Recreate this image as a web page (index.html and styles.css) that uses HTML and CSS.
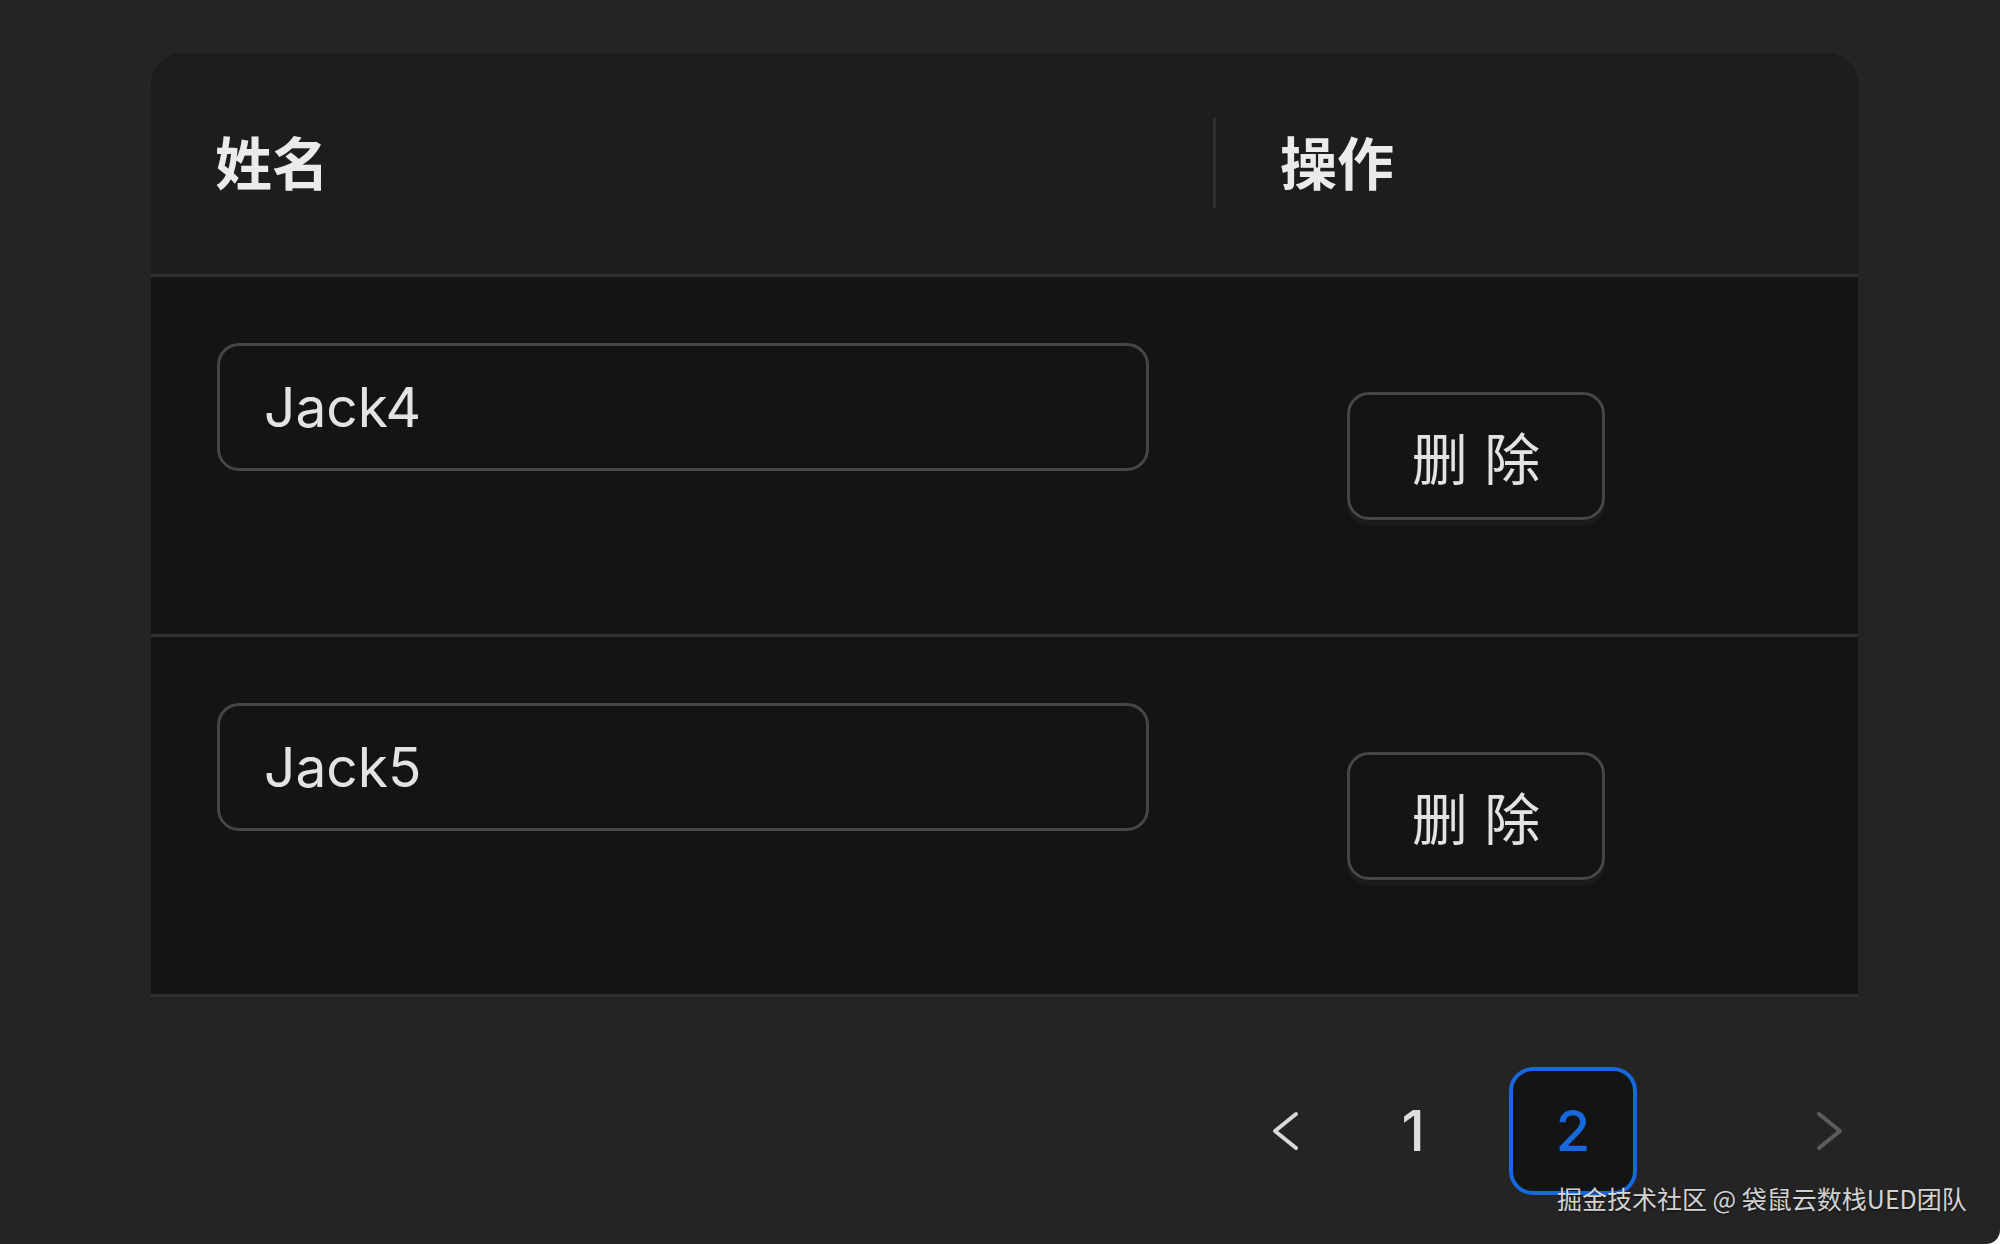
FILE: index.html
```html
<!DOCTYPE html>
<html lang="zh-CN">
<head>
<meta charset="utf-8">
<title>Table</title>
<link rel="stylesheet" href="styles.css">
</head>
<body>
<div class="page">
  <div class="table">
    <div class="thead">
      <div class="th">姓名</div>
      <div class="th th-action">操作</div>
    </div>
    <div class="row">
      <div class="td td-name"><div class="input">Jack4</div></div>
      <div class="td td-action"><button class="btn">删 除</button></div>
    </div>
    <div class="row">
      <div class="td td-name"><div class="input">Jack5</div></div>
      <div class="td td-action"><button class="btn">删 除</button></div>
    </div>
  </div>
  <div class="pagination">
    <div class="pg-item pg-prev">
      <svg width="28" height="40" viewBox="0 0 28 40"><polyline points="25,3 4,20 25,37" fill="none" stroke="currentColor" stroke-width="4" stroke-linecap="round" stroke-linejoin="round"/></svg>
    </div>
    <div class="pg-item">1</div>
    <div class="pg-item pg-active">2</div>
    <div class="pg-item pg-next">
      <svg width="28" height="40" viewBox="0 0 28 40"><polyline points="3,3 24,20 3,37" fill="none" stroke="currentColor" stroke-width="4" stroke-linecap="round" stroke-linejoin="round"/></svg>
    </div>
  </div>
  <div class="watermark">掘金技术社区 @ 袋鼠云数栈UED团队</div>
</div>
</body>
</html>
```
FILE: styles.css
```css
html, body {
  margin: 0;
  padding: 0;
}
body {
  background: #ffffff;
}
.page {
  position: relative;
  width: 2000px;
  height: 1244px;
  box-sizing: border-box;
  padding-top: 53px;
  background: #242424;
  border-bottom-right-radius: 14px;
  overflow: hidden;
  font-family: Inter, "Noto Sans CJK SC", sans-serif;
}
.table {
  margin-left: 151px;
  width: 1707px;
  border-radius: 32px 32px 0 0;
  overflow: hidden;
  background: #141414;
}
.thead {
  display: grid;
  grid-template-columns: 1062px 1fr;
  height: 221px;
  background: #1d1d1d;
  border-bottom: 3px solid #303030;
}
.th {
  position: relative;
  display: flex;
  align-items: center;
  padding-left: 64px;
  padding-bottom: 8px;
  font-family: "Noto Sans CJK SC", sans-serif;
  font-size: 57px;
  font-weight: 600;
  color: #ebebeb;
}
.th-action {
  padding-left: 67px;
}
.th-action::before {
  content: "";
  position: absolute;
  left: 0;
  top: 65px;
  width: 3px;
  height: 90px;
  background: #303030;
}
.row {
  display: grid;
  grid-template-columns: 1062px 1fr;
  border-bottom: 3px solid #303030;
}
.td-name {
  padding: 66px 64px 67px 66px;
}
.input {
  box-sizing: border-box;
  height: 128px;
  margin-bottom: 96px;
  padding-left: 44px;
  display: flex;
  align-items: center;
  border: 3px solid #464646;
  border-radius: 22px;
  background: #141414;
  color: #e3e3e3;
  font-size: 55px;
}
.td-action {
  display: flex;
  align-items: center;
  padding-left: 134px;
}
.btn {
  box-sizing: border-box;
  width: 258px;
  height: 128px;
  border: 3px solid #464646;
  border-radius: 22px;
  background: #141414;
  color: #e3e3e3;
  font-family: "Noto Sans CJK SC", sans-serif;
  font-size: 56px;
  word-spacing: 4px;
  padding: 0;
  box-shadow: 0 6px 0 rgba(255, 255, 255, 0.03);
}
.pagination {
  display: flex;
  justify-content: flex-end;
  margin-top: 70px;
  padding-right: 106px;
}
.pg-item {
  box-sizing: border-box;
  width: 128px;
  height: 128px;
  display: flex;
  align-items: center;
  justify-content: center;
  font-size: 56px;
  font-weight: 500;
  color: #dedede;
}
.pg-prev {
  color: #d9d9d9;
}
.pg-active {
  margin-left: 32px;
  border: 4px solid #1668dc;
  border-radius: 24px;
  background: #141414;
  color: #1668dc;
  font-weight: 500;
}
.pg-next {
  margin-left: 129px;
  color: #5c5c5c;
}
.watermark {
  position: absolute;
  left: 1557px;
  top: 1183px;
  font-family: "Noto Sans CJK SC", sans-serif;
  font-size: 25px;
  line-height: 30px;
  color: rgba(255, 255, 255, 0.82);
  text-shadow: 0 1px 2px rgba(0, 0, 0, 0.6);
  white-space: nowrap;
}
```
